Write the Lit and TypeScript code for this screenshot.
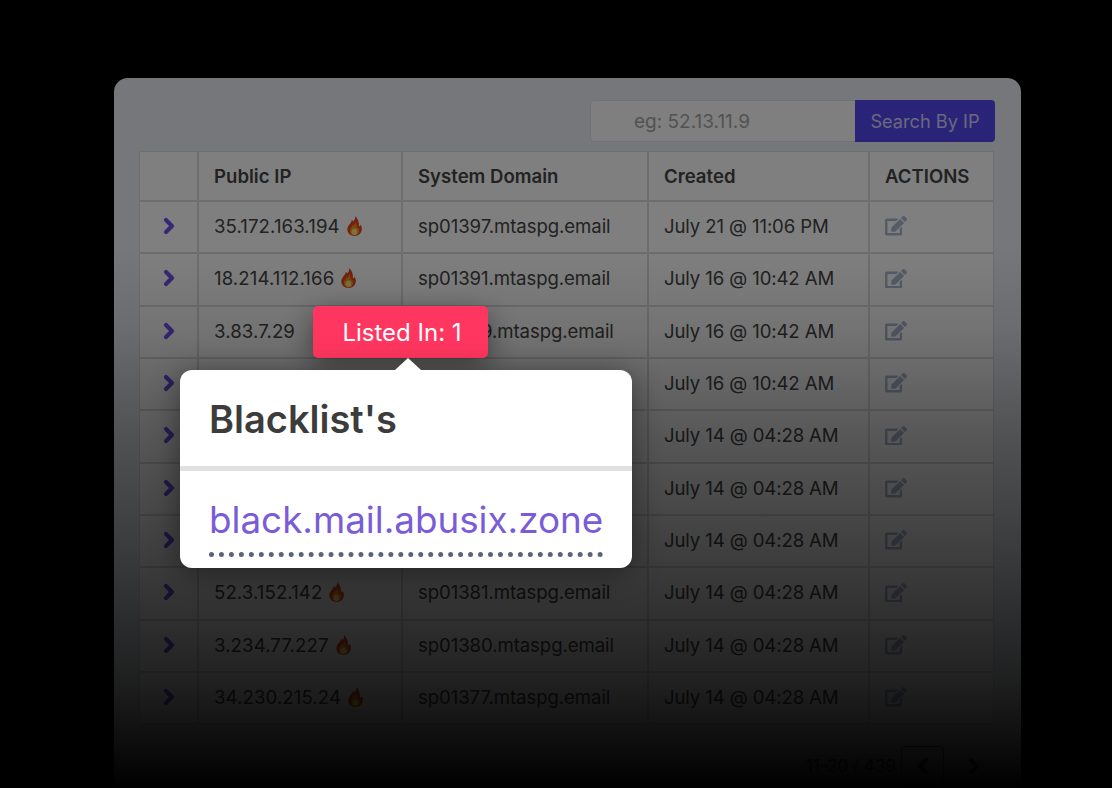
import { LitElement, html, css } from "lit";
import { customElement } from "lit/decorators.js";

const rows = [
  ["35.172.163.194", true, "sp01397.mtaspg.email", "July 21 @ 11:06 PM"],
  ["18.214.112.166", true, "sp01391.mtaspg.email", "July 16 @ 10:42 AM"],
  ["3.83.7.29", false, "sp01389.mtaspg.email", "July 16 @ 10:42 AM"],
  ["3.83.7.12", false, "sp01388.mtaspg.email", "July 16 @ 10:42 AM"],
  ["54.86.12.40", true, "sp01386.mtaspg.email", "July 14 @ 04:28 AM"],
  ["34.201.8.77", true, "sp01384.mtaspg.email", "July 14 @ 04:28 AM"],
  ["3.91.44.118", true, "sp01382.mtaspg.email", "July 14 @ 04:28 AM"],
  ["52.3.152.142", true, "sp01381.mtaspg.email", "July 14 @ 04:28 AM"],
  ["3.234.77.227", true, "sp01380.mtaspg.email", "July 14 @ 04:28 AM"],
  ["34.230.215.24", true, "sp01377.mtaspg.email", "July 14 @ 04:28 AM"],
] as const;

const chevron = (cls: string) => html`<svg class=${cls} viewBox="0 0 12 18"><path fill="none" stroke="currentColor" stroke-width="4.2" stroke-linejoin="round" stroke-linecap="round" d="M3 3l6 6-6 6"/></svg>`;

const chevronLeft = html`<svg class="pg-chev" viewBox="0 0 12 18"><path fill="none" stroke="currentColor" stroke-width="4.2" stroke-linejoin="round" stroke-linecap="round" d="M9 3L3 9l6 6"/></svg>`;

const edit = html`<svg class="edit" viewBox="0 0 576 512"><path fill="currentColor" d="M402.6 83.2l90.2 90.2c3.8 3.8 3.8 10 0 13.8L274.4 405.6l-92.8 10.3c-12.4 1.4-22.9-9.1-21.5-21.5l10.3-92.8L388.8 83.2c3.8-3.8 10-3.8 13.8 0zm162-22.9l-48.8-48.8c-15.2-15.2-39.9-15.2-55.2 0l-35.4 35.4c-3.8 3.8-3.8 10 0 13.8l90.2 90.2c3.8 3.8 10 3.8 13.8 0l35.4-35.4c15.2-15.3 15.2-40 0-55.2zM384 346.2V448H64V128h229.8c3.2 0 6.2-1.3 8.5-3.5l40-40c7.6-7.6 2.2-20.5-8.5-20.5H48C21.5 64 0 85.5 0 112v352c0 26.5 21.5 48 48 48h352c26.5 0 48-21.5 48-48V306.2c0-10.7-12.9-16-20.5-8.5l-40 40c-2.2 2.3-3.5 5.3-3.5 8.5z"/></svg>`;

const flame = html`<svg class="flame" viewBox="0 0 16 20">
  <path fill="#e2451f" d="M8.600 0c.5 2.600-.6 4-1.900 5.500C6.300 4.700 5.900 4.300 5.200 4 5.400 6 3.900 7 2.300 9.200.6 11.600.4 14 1.500 16.200 2.800 18.700 5.300 20 8 20s5.400-1.200 6.700-3.900c1.200-2.600.7-5.200-.6-7.300-.4 1-.9 1.500-1.700 1.800C12.800 6.200 11.400 2.200 8.600 0z"/>
  <path fill="#fa8d1c" d="M8.500 6c.2 1.800-.6 2.800-1.400 3.700-.3-.5-.6-.7-1-.9C6 10.400 4 11.800 3.500 14.200 3 17 5.300 19.500 8 19.500s5-2.300 4.600-5.200c-.2-1.400-.8-2.300-1.500-3 0 .6-.3 1-.7 1.300C10.500 10 9.800 7.500 8.500 6z"/>
  <path fill="#ffe27a" d="M8 12.500c-2 0-3 2-3 3.500 0 1.700 1.300 3 3 3s3-1.300 3-3c0-1.500-1-3.500-3-3.500z"/>
</svg>`;

@customElement("app-root")
export class AppRoot extends LitElement {
  static styles = css`
    :host {
      display: block;
      position: relative;
      height: 788px;
      overflow: hidden;
      background: #000;
      font-family: Inter, "Liberation Sans", sans-serif;
      color: #444;
    }
    .stage {
      padding: 78px 91px 0 114px;
    }
    .card {
      background: #eaeef4;
      border-radius: 14px 14px 0 0;
      padding: 22px 26px 0 25px;
      height: 720px;
      box-sizing: border-box;
    }
    .search {
      display: flex;
      justify-content: flex-end;
      height: 42px;
      margin-bottom: 9px;
    }
    .search-input {
      width: 265px;
      box-sizing: border-box;
      background: #fff;
      border: 1px solid #dfe3e8;
      border-right: 0;
      border-radius: 5px 0 0 5px;
      padding: 0 0 0 43px;
      font-size: 19px;
      color: #a5a5a5;
      display: flex;
      align-items: center;
    }
    .search-btn {
      width: 140px;
      display: flex;
      align-items: center;
      justify-content: center;
      background: #5548f0;
      color: rgba(255, 255, 255, 0.75);
      font-size: 18.2px;
      border-radius: 0 4px 4px 0;
    }
    table {
      border-collapse: separate;
      border-spacing: 0;
      table-layout: fixed;
      width: 855px;
      background: #fff;
      font-size: 18.6px;
    }
    th, td {
      border: 1px solid #dcdcdc;
      padding: 0 0 0 15px;
      text-align: left;
      box-sizing: border-box;
      white-space: nowrap;
    }
    th {
      height: 50px;
      font-weight: 600;
      color: #444;
    }
    td {
      height: 52.33px;
      padding-bottom: 2px;
      font-weight: 400;
    }
    .c0 { width: 59px; }
    .c1 { width: 204px; }
    .c2 { width: 246px; }
    .c3 { width: 221px; }
    .c4 { width: 125px; }
    td.arrow { padding: 0 0 2px 0; text-align: center; }
    .chev {
      display: block;
      width: 12px;
      height: 18px;
      margin: 0 auto;
      color: #6f4fe8;
    }
    .ip { display: flex; align-items: center; gap: 6px; letter-spacing: 0.1px; }
    .domain { letter-spacing: -0.08px; }
    .date { letter-spacing: -0.12px; }
    .flame { width: 17px; height: 20px; }
    .edit {
      display: block;
      width: 22px;
      height: 19.5px;
      color: #aab6cf;
    }
    .pager {
      display: flex;
      justify-content: flex-end;
      align-items: center;
      margin-top: 22px;
      font-size: 17px;
      color: #333;
    }
    .pg-btn {
      width: 43px;
      height: 40px;
      box-sizing: border-box;
      display: flex;
      align-items: center;
      justify-content: center;
      border-radius: 4px;
    }
    .pg-btn.on { border: 1px solid #666; margin: 0 8px 0 5px; }
    .pg-chev { width: 12px; height: 18px; color: #333; }
    .veil {
      position: absolute;
      inset: 0;
      background: linear-gradient(
        180deg,
        rgba(0, 0, 0, 0.5) 0,
        rgba(0, 0, 0, 0.5) 250px,
        rgba(0, 0, 0, 0.55) 330px,
        rgba(0, 0, 0, 0.66) 436px,
        rgba(0, 0, 0, 0.76) 560px,
        rgba(0, 0, 0, 0.87) 680px,
        #000 788px
      );
    }
    .badge {
      position: absolute;
      left: 313px;
      top: 306px;
      width: 175px;
      height: 52px;
      box-sizing: border-box;
      background: #ff365f;
      color: #fff;
      border-radius: 5px;
      font-size: 24px;
      display: flex;
      align-items: center;
      justify-content: center;
      padding-left: 3px;
      box-shadow: 0 8px 28px rgba(0, 0, 0, 0.45);
    }
    .pop {
      position: absolute;
      left: 180px;
      top: 370px;
      width: 452px;
      height: 198px;
      box-sizing: border-box;
      background: #fff;
      border-radius: 12px;
      box-shadow: 0 4px 30px rgba(0, 0, 0, 0.45);
    }
    .pop::before {
      content: "";
      position: absolute;
      left: 215px;
      top: -12px;
      width: 0;
      height: 0;
      border-left: 13px solid transparent;
      border-right: 13px solid transparent;
      border-bottom: 12px solid #fff;
    }
    .pop-head {
      height: 101px;
      box-sizing: border-box;
      padding: 27px 0 0 29px;
      font-size: 38px;
      line-height: 44px;
      font-weight: 600;
      color: #3c3c3c;
      border-bottom: 5px solid #e0e0e0;
    }
    .pop-body { padding: 26px 0 0 29px; }
    .link {
      display: inline-block;
      font-size: 36.8px;
      line-height: 46px;
      padding-bottom: 9px;
      color: #7a5cd8;
      border-bottom: 5px dotted #5a6478;
    }
  `;

  render() {
    return html`
      <div class="stage">
        <div class="card">
          <div class="search">
            <div class="search-input">eg: 52.13.11.9</div>
            <div class="search-btn">Search By IP</div>
          </div>
          <table>
            <colgroup>
              <col class="c0" /><col class="c1" /><col class="c2" /><col class="c3" /><col class="c4" />
            </colgroup>
            <thead>
              <tr>
                <th></th>
                <th>Public IP</th>
                <th>System Domain</th>
                <th>Created</th>
                <th>ACTIONS</th>
              </tr>
            </thead>
            <tbody>
              ${rows.map(
                (r) => html`<tr>
                  <td class="arrow">${chevron("chev")}</td>
                  <td><span class="ip">${r[0]}${r[1] ? flame : ""}</span></td>
                  <td class="domain">${r[2]}</td>
                  <td class="date">${r[3]}</td>
                  <td>${edit}</td>
                </tr>`
              )}
            </tbody>
          </table>
          <div class="pager">
            <span>11-20 / 439</span>
            <div class="pg-btn on">${chevronLeft}</div>
            <div class="pg-btn">${chevron("pg-chev")}</div>
          </div>
        </div>
      </div>
      <div class="veil"></div>
      <div class="badge">Listed In: 1</div>
      <div class="pop">
        <div class="pop-head">Blacklist's</div>
        <div class="pop-body"><span class="link">black.mail.abusix.zone</span></div>
      </div>
    `;
  }
}
